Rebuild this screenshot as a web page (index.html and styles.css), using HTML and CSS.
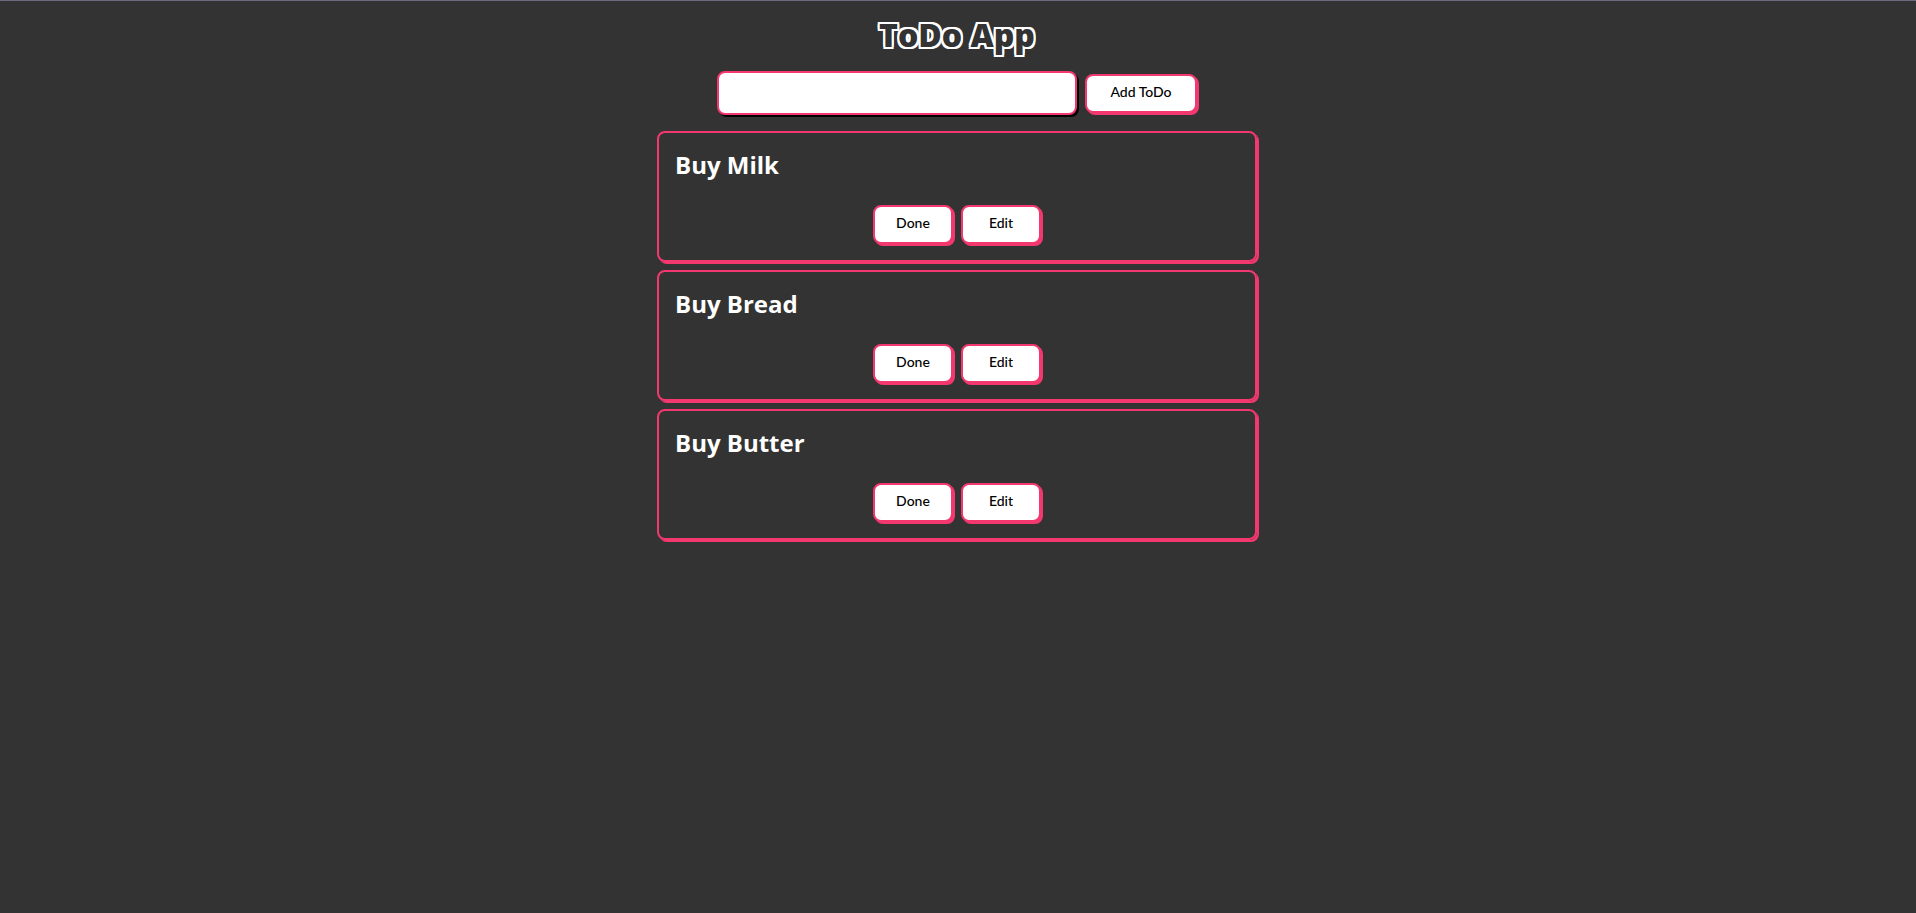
FILE: index.html
```html
<!DOCTYPE html>
<html lang="en">
<head>
<meta charset="utf-8">
<title>ToDo App</title>
<link rel="stylesheet" href="styles.css">
</head>
<body>
<main class="app">
  <h1 class="title">ToDo App</h1>
  <form class="add-form">
    <input class="add-input" type="text" aria-label="New todo">
    <button class="btn btn-add" type="button">Add ToDo</button>
  </form>
  <ul class="list">
    <li class="card">
      <h2 class="name">Buy Milk</h2>
      <div class="actions"><button class="btn" type="button">Done</button><button class="btn" type="button">Edit</button></div>
    </li>
    <li class="card">
      <h2 class="name">Buy Bread</h2>
      <div class="actions"><button class="btn" type="button">Done</button><button class="btn" type="button">Edit</button></div>
    </li>
    <li class="card">
      <h2 class="name">Buy Butter</h2>
      <div class="actions"><button class="btn" type="button">Done</button><button class="btn" type="button">Edit</button></div>
    </li>
  </ul>
</main>
</body>
</html>
```
FILE: styles.css
```css
* {
  box-sizing: border-box;
}

body {
  margin: 0;
  min-height: 100vh;
  border-top: 1px solid #6b6b7d;
  background: #333;
  color: #fff;
  font-family: Lato, "Open Sans", sans-serif;
}

.app {
  display: flex;
  flex-direction: column;
  align-items: center;
  padding: 14px 10px 16px 8px;
}

.title {
  margin: 0 0 16px;
  color: #333;
  font-family: "Open Sans", sans-serif;
  font-size: 32px;
  font-weight: 800;
  line-height: 40px;
  text-shadow: -2px 0 #fff, 2px 0 #fff, 0 -2px #fff, 0 2px #fff,
    -2px -2px #fff, 2px -2px #fff, -2px 2px #fff, 2px 2px #fff;
}

.add-form {
  display: flex;
  align-items: center;
  gap: 8px;
  margin-bottom: 16px;
}

.add-input {
  width: 360px;
  height: 44px;
  padding: 8px;
  border: 2px solid #f2386e;
  border-radius: 8px;
  background: #fff;
  box-shadow: 2px 2px #000;
  font: inherit;
}

.btn {
  min-width: 80px;
  height: 39px;
  padding: 0 16px 4px;
  border: 2px solid #f2386e;
  border-radius: 8px;
  background: #fff;
  box-shadow: 2px 2px #f2386e;
  color: #000;
  font-family: inherit;
  font-size: 14px;
  font-weight: 500;
}

.btn-add {
  min-width: 112px;
}

.list {
  display: flex;
  flex-direction: column;
  gap: 8px;
  width: 100%;
  max-width: 600px;
  margin: 0;
  padding: 0;
  list-style: none;
}

.card {
  padding: 16px;
  border: 2px solid #f2386e;
  border-radius: 8px;
  box-shadow: 2px 2px #f2386e;
}

.name {
  margin: 0 0 24px;
  font-family: "Open Sans", sans-serif;
  font-size: 24px;
  font-weight: 700;
  line-height: 32px;
}

.actions {
  display: flex;
  justify-content: center;
  gap: 8px;
}
```
